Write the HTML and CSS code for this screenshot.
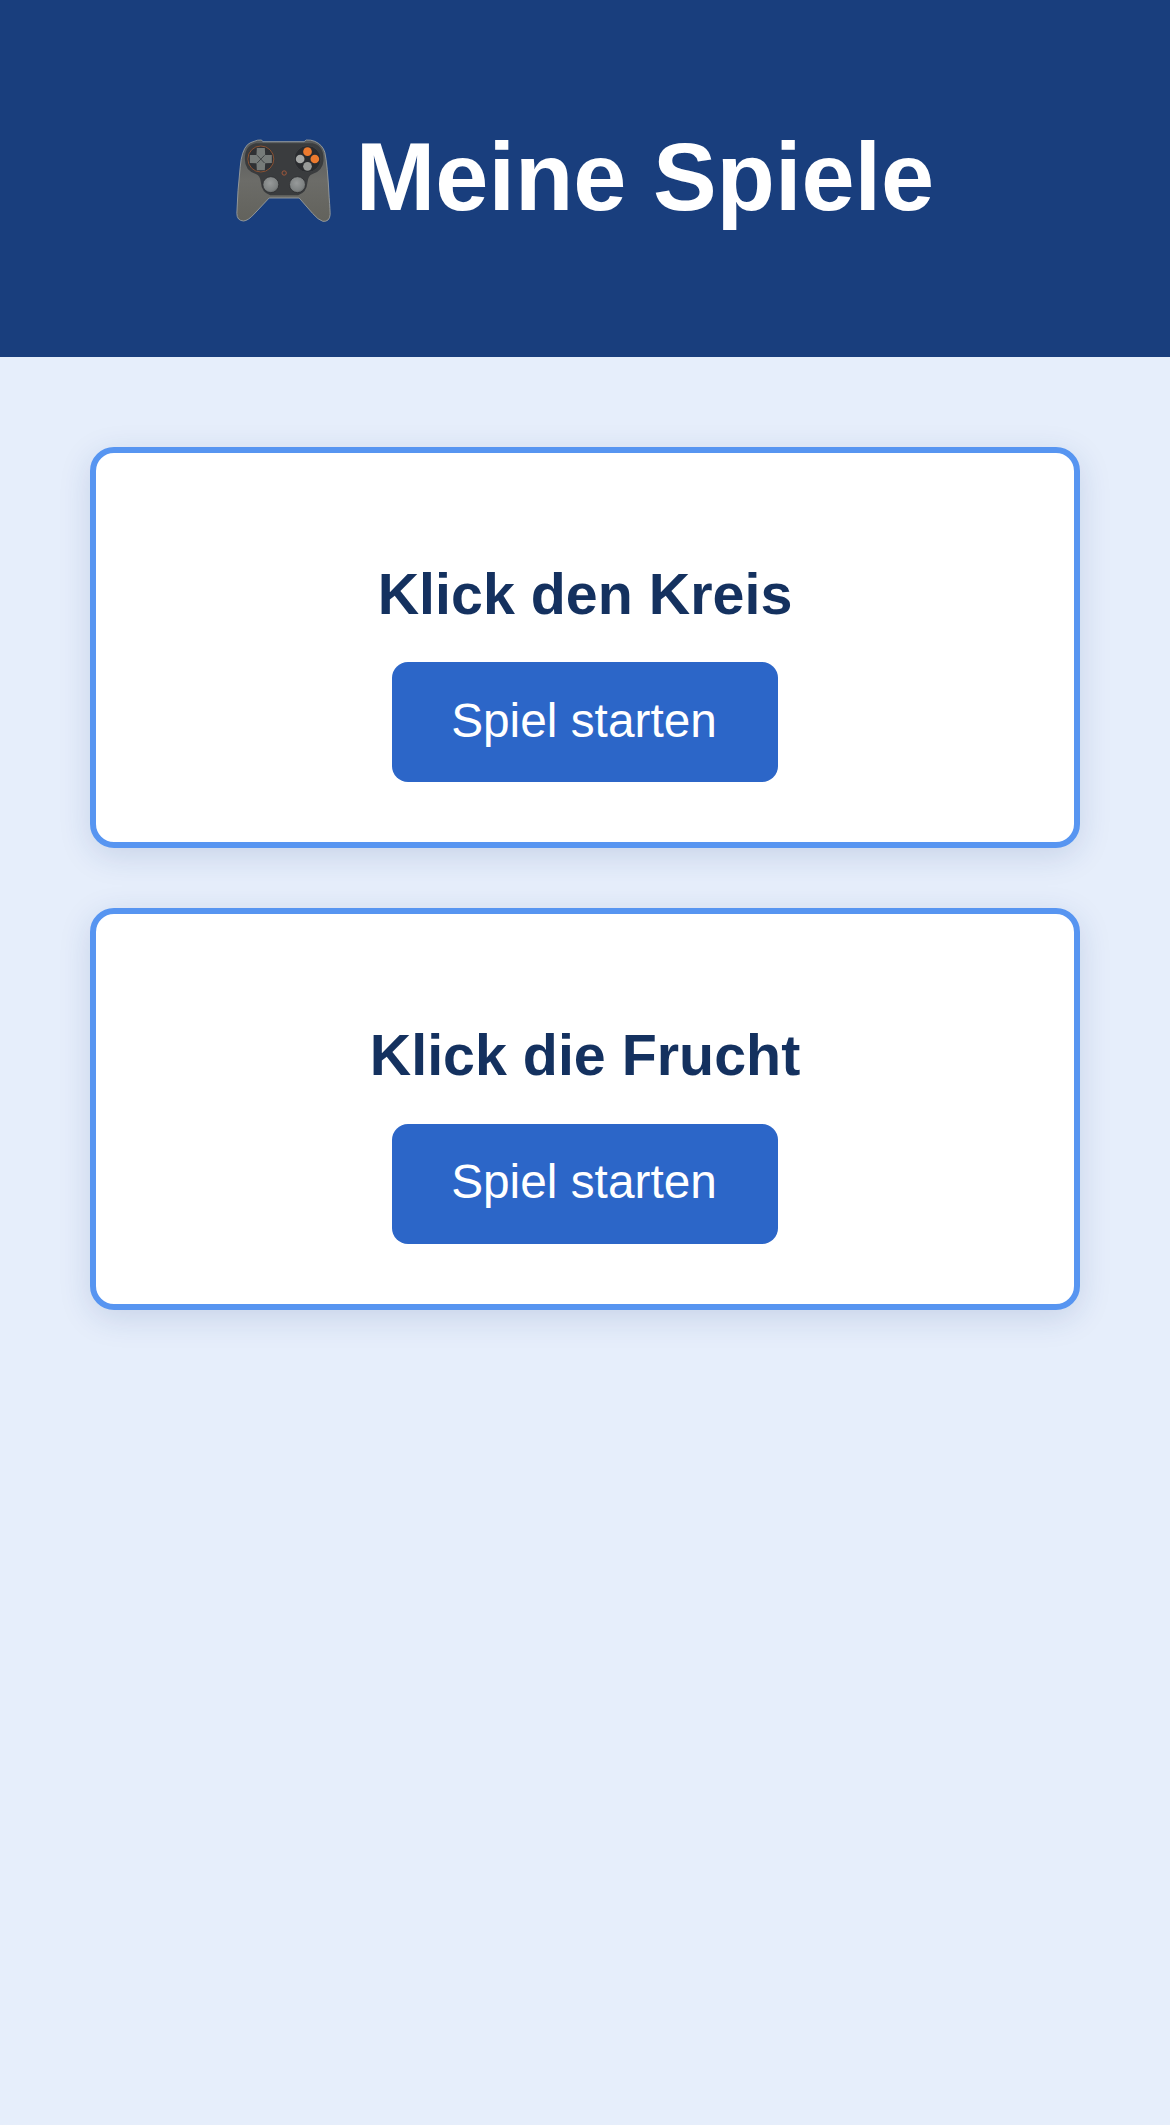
FILE: index.html
```html
<!DOCTYPE html>
<html lang="de">
<head>
<meta charset="utf-8">
<title>Meine Spiele</title>
<link rel="stylesheet" href="styles.css">
</head>
<body>
<header class="header">
  <h1 class="title">
    <svg class="pad" viewBox="76 95 284 252" aria-hidden="true">
      <defs>
        <linearGradient id="body" x1="0" y1="0" x2="0" y2="1">
          <stop offset="0" stop-color="#55585a"/>
          <stop offset="0.5" stop-color="#6c6c68"/>
          <stop offset="1" stop-color="#62625c"/>
        </linearGradient>
        <radialGradient id="stick" cx="0.45" cy="0.4" r="0.65">
          <stop offset="0" stop-color="#979a9a"/>
          <stop offset="0.7" stop-color="#7e8282"/>
          <stop offset="1" stop-color="#5c5f60"/>
        </radialGradient>
      </defs>
      <path d="M130 102 Q140 97 152 98 L156 103 L280 103 L286 98 Q300 97 312 102 Q335 112 342 135 Q350 170 355 270 Q358 310 358 322 Q356 344 336 342 Q322 338 305 318 L265 272 L175 272 L130 320 Q112 340 98 341 Q78 340 78 318 Q80 250 88 180 Q92 130 110 112 Q118 105 130 102 Z" fill="url(#body)" stroke="#a0a4a2" stroke-width="2.5"/>
      <path d="M135 108 L305 108 Q340 115 338 160 Q336 190 305 200 Q292 204 290 225 Q288 255 262 264 L178 264 Q152 255 150 225 Q148 204 135 200 Q102 190 102 155 Q102 115 135 108 Z" fill="#3a3c3e"/>
      <circle cx="150" cy="155" r="39" fill="#2f3134" stroke="#8a5233" stroke-width="3"/>
      <path d="M138 122 H162 L163 143 L183 143 V167 L163 168 L162 189 H138 L137 168 L117 167 V143 L137 143 Z" fill="#767b79"/>
      <path d="M139 144 L161 167 M161 144 L139 167" stroke="#35383b" stroke-width="2.5"/>
      <circle cx="290" cy="155" r="40" fill="#2a2c2f" stroke="#45474a" stroke-width="2"/>
      <circle cx="290" cy="133" r="13" fill="#ec7a2e"/>
      <circle cx="312" cy="155" r="13" fill="#ec7a2e"/>
      <circle cx="268" cy="155" r="13" fill="#a6a8a6"/>
      <circle cx="290" cy="177" r="13" fill="#989a98"/>
      <circle cx="220" cy="197" r="6.5" fill="none" stroke="#a0573a" stroke-width="3"/>
      <circle cx="180" cy="232" r="24" fill="url(#stick)" stroke="#2c2e30" stroke-width="2.5"/>
      <circle cx="260" cy="232" r="24" fill="url(#stick)" stroke="#2c2e30" stroke-width="2.5"/>
    </svg>
    <span>Meine Spiele</span>
  </h1>
</header>
<main class="list">
  <section class="card">
    <h2 class="card-title">Klick den Kreis</h2>
    <button class="play" type="button">Spiel starten</button>
  </section>
  <section class="card">
    <h2 class="card-title">Klick die Frucht</h2>
    <button class="play" type="button">Spiel starten</button>
  </section>
</main>
</body>
</html>
```
FILE: styles.css
```css
html, body {
  margin: 0;
  padding: 0;
}
body {
  min-height: 2125px;
  background: #e6eefb;
  font-family: "Liberation Sans", Arial, sans-serif;
}
.header {
  height: 357px;
  box-sizing: border-box;
  padding-bottom: 2px;
  background: #193e7d;
  display: flex;
  align-items: center;
  justify-content: center;
}
.title {
  margin: 0;
  display: flex;
  align-items: center;
  gap: 25px;
  color: #fff;
  font-size: 95.5px;
  font-weight: 700;
  line-height: 1;
}
.pad {
  width: 95px;
  height: 84px;
  margin-top: 6px;
}
.list {
  padding: 90px 90px 0;
  display: flex;
  flex-direction: column;
  gap: 60px;
}
.card {
  height: 401.4px;
  box-sizing: border-box;
  border: 6px solid #5795f1;
  border-radius: 24px;
  background: #fff;
  box-shadow: 0 8px 32px rgba(25, 62, 125, 0.15);
  display: flex;
  flex-direction: column;
  align-items: center;
  padding-top: 108px;
}
.card-title {
  margin: 0 0 35.2px;
  color: #14315f;
  font-size: 57.4px;
  font-weight: 700;
  line-height: 66px;
}
.play {
  width: 386px;
  height: 120px;
  border: 0;
  border-radius: 16px;
  background: #2c66c8;
  color: #fff;
  font-family: inherit;
  font-size: 47.8px;
  padding: 0 2px 4px 0;
}
```
